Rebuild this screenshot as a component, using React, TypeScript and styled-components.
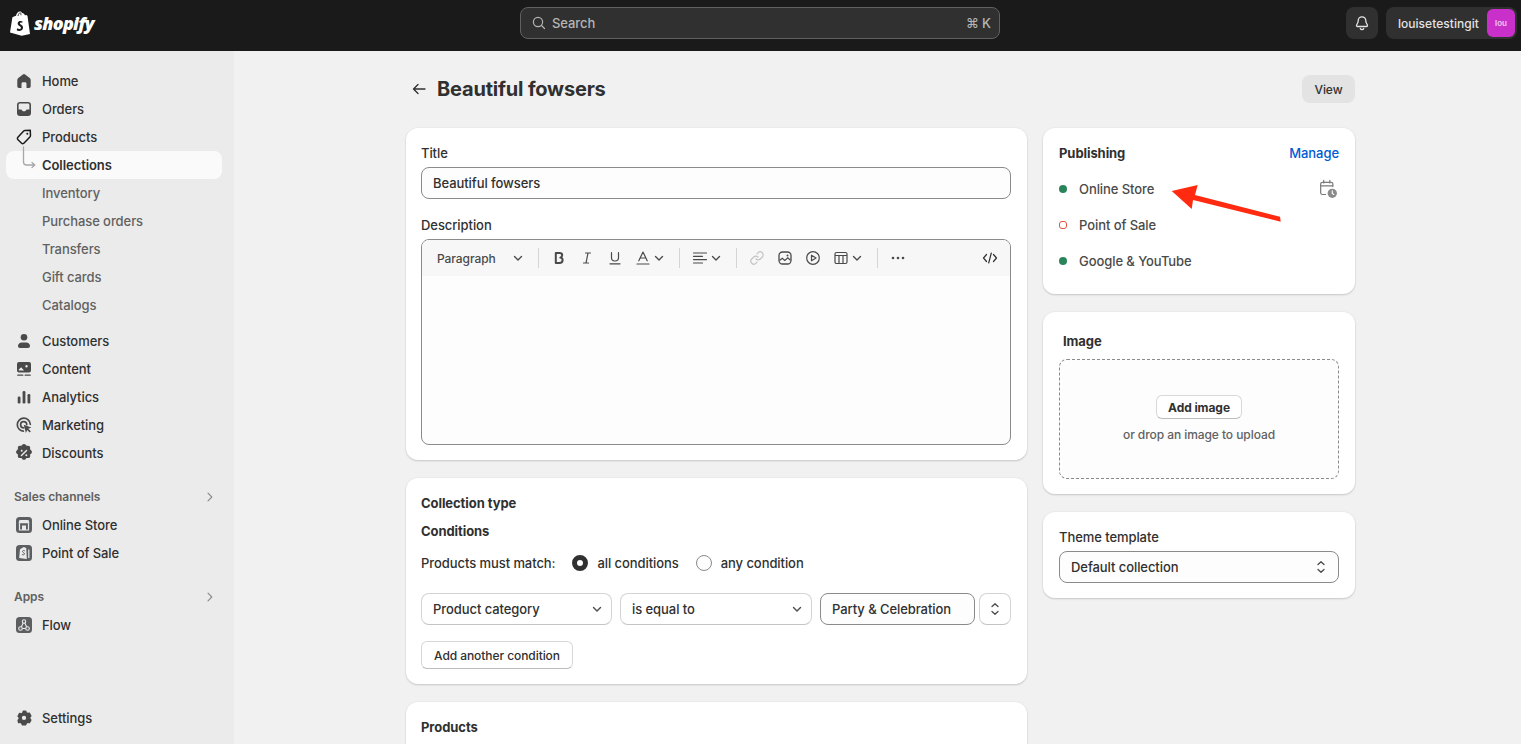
import React from "react";
import styled, { createGlobalStyle } from "styled-components";

const Global = createGlobalStyle`
  html, body { margin: 0; padding: 0; height: 100%; overflow: hidden; }
  body { font-family: Inter, "Liberation Sans", sans-serif; font-size: 13px; color: #303030; background: #f1f1f1; font-weight: 450; letter-spacing: -0.07px; }
  #root { height: 100%; }
  * { box-sizing: border-box; }
`;

const Shell = styled.div`
  height: 744px;
  display: flex;
  flex-direction: column;
  overflow: hidden;
`;
const TopBar = styled.header`
  height: 51px;
  flex: none;
  background: #1a1a1a;
  display: grid;
  grid-template-columns: 511px 480px 1fr;
  align-items: center;
  padding: 0 4px 5px 9px;
`;
const Logo = styled.div`
  display: flex;
  align-items: center;
  gap: 3px;
  color: #fff;
`;
const LogoText = styled.span`
  font-family: "Open Sans", sans-serif;
  font-weight: 800;
  font-style: italic;
  font-size: 18px;
  letter-spacing: -0.75px;
  line-height: 24px;
`;
const SearchBox = styled.div`
  height: 32px;
  background: #303030;
  border: 1px solid #616161;
  border-radius: 8px;
  display: flex;
  align-items: center;
  padding: 0 8px 0 10px;
  gap: 5px;
  color: #b5b5b5;
`;
const SearchLabel = styled.span`
  flex: 1;
`;
const TopRight = styled.div`
  display: flex;
  justify-content: flex-end;
  align-items: center;
  gap: 8px;
`;
const BellButton = styled.div`
  width: 32px;
  height: 32px;
  border-radius: 8px;
  background: #303030;
  display: flex;
  align-items: center;
  justify-content: center;
`;
const UserButton = styled.div`
  height: 32px;
  border-radius: 8px;
  background: #303030;
  display: flex;
  align-items: center;
  gap: 8px;
  padding: 0 2px 0 12px;
  color: #e3e3e3;
  font-size: 12px;
  font-weight: 500;
  letter-spacing: 0.05px;
`;
const Avatar = styled.div`
  width: 28px;
  height: 28px;
  border-radius: 6px;
  background: #c930c9;
  color: #f3c9f3;
  font-size: 8px;
  font-weight: 600;
  display: flex;
  align-items: center;
  justify-content: center;
`;
const Body = styled.div`
  flex: 1;
  display: flex;
  min-height: 0;
`;
const Sidebar = styled.nav`
  width: 234px;
  flex: none;
  background: #ebebeb;
  padding: 16px 12px 12px 6px;
  display: flex;
  flex-direction: column;
`;
const NavGroup = styled.div<{ $mb?: number; $mt?: number }>`
  display: flex;
  flex-direction: column;
  margin-top: ${(p) => p.$mt ?? 0}px;
  margin-bottom: ${(p) => p.$mb ?? 0}px;
`;
const NavRow = styled.div<{ $active?: boolean; $sub?: boolean }>`
  position: relative;
  height: 28px;
  border-radius: 8px;
  display: flex;
  align-items: center;
  padding-left: 10px;
  gap: 10px;
  background: ${(p) => (p.$active ? "#fafafa" : "transparent")};
  color: ${(p) => (p.$sub ? "#616161" : "#303030")};
  font-weight: ${(p) => (p.$active ? 600 : 450)};
`;
const NavIconSlot = styled.span`
  width: 16px;
  height: 20px;
  flex: none;
  display: flex;
  align-items: center;
  justify-content: center;
`;
const NavConnector = styled.svg`
  position: absolute;
  left: 16px;
  top: -5px;
`;
const NavHeading = styled.div`
  height: 28px;
  display: flex;
  align-items: center;
  justify-content: space-between;
  padding: 0 8px 1px 8px;
  color: #616161;
  font-size: 12px;
  font-weight: 600;
`;
const Spacer = styled.div`
  flex: 1;
`;
const Main = styled.main`
  flex: 1;
  min-width: 0;
  padding: 24px 166px 0 172px;
`;
const PageHeader = styled.div`
  height: 28px;
  display: flex;
  align-items: center;
  margin-bottom: 25px;
  padding-left: 5px;
`;
const PageTitle = styled.h1`
  flex: 1;
  margin: 0 0 0 10px;
  font-size: 20px;
  line-height: 28px;
  font-weight: 650;
  letter-spacing: -0.18px;
  color: #303030;
`;
const ViewButton = styled.div`
  width: 53px;
  height: 28px;
  border-radius: 8px;
  background: #e3e3e3;
  font-size: 12px;
  font-weight: 550;
  display: flex;
  align-items: center;
  justify-content: center;
`;
const Columns = styled.div`
  display: grid;
  grid-template-columns: 621px 312px;
  gap: 16px;
  align-items: start;
`;
const Column = styled.div`
  display: flex;
  flex-direction: column;
  gap: 18px;
`;
const Card = styled.section<{ $h: number; $pl?: number }>`
  position: relative;
  height: ${(p) => p.$h}px;
  background: #fff;
  border-radius: 12px;
  padding: 16px 16px 0 ${(p) => p.$pl ?? 15}px;
  box-shadow: 0 1px 2px rgba(26, 26, 26, 0.18), 0 0 0 1px rgba(0, 0, 0, 0.02);
`;
const Label = styled.div<{ $mt?: number; $strong?: boolean; $ml?: number }>`
  height: 18px;
  line-height: 18px;
  margin-top: ${(p) => p.$mt ?? 0}px;
  margin-left: ${(p) => p.$ml ?? 0}px;
  font-weight: ${(p) => (p.$strong ? 650 : 450)};
`;
const TextInput = styled.div`
  height: 32px;
  width: 100%;
  margin-top: 5px;
  border: 1px solid #8a8a8a;
  border-radius: 8px;
  background: #fdfdfd;
  display: flex;
  align-items: center;
  padding: 0 11px;
`;
const Editor = styled.div`
  margin-top: 5px;
  height: 206px;
  border: 1px solid #8a8a8a;
  border-radius: 8px;
  background: #fdfdfd;
  overflow: hidden;
`;
const Toolbar = styled.div`
  height: 36px;
  background: #f7f7f7;
  display: flex;
  align-items: center;
  color: #4a4a4a;
`;
const ParaSelect = styled.div`
  width: 110px;
  padding: 0 9px 0 15px;
  display: flex;
  align-items: center;
  justify-content: space-between;
  font-size: 12px;
  color: #4a4a4a;
`;
const ToolDivider = styled.span`
  width: 1px;
  height: 20px;
  margin: 0 6px;
  background: #d4d4d4;
  flex: none;
`;
const ToolBtn = styled.span<{ $wide?: boolean; $push?: boolean }>`
  width: ${(p) => (p.$wide ? 44 : 28)}px;
  height: 28px;
  flex: none;
  display: flex;
  align-items: center;
  justify-content: ${(p) => (p.$wide ? "flex-start" : "center")};
  padding-left: ${(p) => (p.$wide ? 6 : 0)}px;
  gap: 3px;
  margin-left: ${(p) => (p.$push ? "auto" : 0)};
  margin-right: ${(p) => (p.$push ? "6px" : 0)};
`;
const MatchRow = styled.div`
  margin-top: 13px;
  height: 20px;
  display: flex;
  align-items: center;
`;
const RadioLabel = styled.span`
  margin-left: 9px;
  margin-right: 17px;
`;
const RadioOn = styled.span`
  width: 16px;
  height: 16px;
  border-radius: 50%;
  border: 5px solid #303030;
  background: #fff;
  margin-left: 17px;
  flex: none;
`;
const RadioOff = styled.span`
  width: 16px;
  height: 16px;
  border-radius: 50%;
  border: 1px solid #8a8a8a;
  background: #fdfdfd;
  flex: none;
`;
const ConditionRow = styled.div`
  margin-top: 20px;
  display: flex;
  align-items: center;
`;
const SelectBox = styled.div<{ $w: number; $mr: number }>`
  width: ${(p) => p.$w}px;
  height: 32px;
  margin-right: ${(p) => p.$mr}px;
  flex: none;
  border: 1px solid #d4d4d4;
  border-bottom-color: #c4c4c4;
  border-radius: 8px;
  background: #fff;
  display: flex;
  align-items: center;
  justify-content: space-between;
  padding: 0 9px 0 11px;
`;
const CondInput = styled.div`
  width: 155px;
  height: 32px;
  margin-right: 4px;
  flex: none;
  border: 1px solid #8a8a8a;
  border-radius: 8px;
  background: #fdfdfd;
  display: flex;
  align-items: center;
  padding: 0 11px;
`;
const Stepper = styled.div`
  width: 32px;
  height: 32px;
  flex: none;
  border: 1px solid #d4d4d4;
  border-bottom-color: #c4c4c4;
  border-radius: 8px;
  display: flex;
  align-items: center;
  justify-content: center;
`;
const OutlineButton = styled.div<{ $w: number; $h: number; $bold?: boolean }>`
  width: ${(p) => p.$w}px;
  height: ${(p) => p.$h}px;
  border-radius: 6px;
  border: 1px solid #d8d8d8;
  border-bottom-color: #bdbdbd;
  background: #fff;
  font-size: 12px;
  font-weight: ${(p) => (p.$bold ? 650 : 550)};
  display: flex;
  align-items: center;
  justify-content: center;
`;
const AddConditionWrap = styled.div`
  margin-top: 16px;
`;
const CardHead = styled.div`
  display: flex;
  justify-content: space-between;
  align-items: center;
  height: 18px;
`;
const ManageLink = styled.span`
  color: #005bd3;
`;
const PubList = styled.div`
  margin-top: 9px;
  display: flex;
  flex-direction: column;
`;
const PubRow = styled.div`
  height: 36px;
  display: flex;
  align-items: center;
  gap: 12px;
  color: #4a4a4a;
`;
const PubName = styled.span`
  flex: 1;
`;
const Dot = styled.span`
  width: 8px;
  height: 8px;
  border-radius: 50%;
  background: #29845a;
  flex: none;
`;
const HollowDot = styled.span`
  width: 8px;
  height: 8px;
  border-radius: 3px;
  border: 1px solid #e5533d;
  background: #fff;
  flex: none;
`;
const ArrowOverlay = styled.svg`
  position: absolute;
  left: 125px;
  top: 55px;
`;
const DropZone = styled.div`
  margin-top: 9px;
  height: 120px;
  border: 1px dashed #8a8a8a;
  border-radius: 8px;
  background: #fdfdfd;
  display: flex;
  flex-direction: column;
  align-items: center;
  padding-top: 35px;
`;
const DropHint = styled.div`
  margin-top: 8px;
  font-size: 12px;
  line-height: 16px;
  color: #616161;
`;
const ThemeSelect = styled.div`
  margin-top: 5px;
  height: 32px;
  border: 1px solid #8a8a8a;
  border-radius: 8px;
  background: #fdfdfd;
  display: flex;
  align-items: center;
  justify-content: space-between;
  padding: 0 12px 0 11px;
`;

const ICON = "#4a4a4a";

const Svg: React.FC<{ s?: number; children: React.ReactNode }> = ({ s = 20, children }) => (
  <svg width={s} height={s} viewBox="0 0 20 20" fill="none" style={{ flex: "none" }}>{children}</svg>
);

const Chevron = ({ c = "#4a4a4a" }: { c?: string }) => (
  <svg width="10" height="10" viewBox="0 0 10 10" fill="none" style={{ flex: "none" }}>
    <path d="M1.5 3.5 5 7l3.5-3.5" stroke={c} strokeWidth="1.4" strokeLinecap="round" strokeLinejoin="round" />
  </svg>
);
const UpDown = () => (
  <svg width="10" height="14" viewBox="0 0 10 14" fill="none" style={{ flex: "none" }}>
    <path d="M2 4.6 5 1.8l3 2.8M2 9.4l3 2.8 3-2.8" stroke="#4a4a4a" strokeWidth="1.3" strokeLinecap="round" strokeLinejoin="round" />
  </svg>
);
const RightChevron = () => (
  <svg width="8" height="10" viewBox="0 0 8 10" fill="none">
    <path d="M2 1.2 5.8 5 2 8.8" stroke="#8a8a8a" strokeWidth="1.1" strokeLinecap="round" strokeLinejoin="round" />
  </svg>
);

const Icons: Record<string, React.ReactNode> = {
  home: <Svg><path d="M8.9 3.4a1.8 1.8 0 0 1 2.2 0l4.6 3.6c.7.5 1 1.200 1 2v6.300c0 1-.8 1.700-1.700 1.700h-2.500v-4.300c0-.8-.7-1.500-1.500-1.500h-2c-.8 0-1.500.7-1.500 1.500V17H5c-1 0-1.700-.7-1.700-1.700V9c0-.8.400-1.500 1-2z" fill={ICON} /></Svg>,
  orders: <Svg><path fillRule="evenodd" clipRule="evenodd" d="M6 3h8a3 3 0 0 1 3 3v8a3 3 0 0 1-3 3H6a3 3 0 0 1-3-3V6a3 3 0 0 1 3-3zm0 1.600A1.400 1.400 0 0 0 4.600 6v4.400H7c.4 0 .7.200.9.600l.4.800c.2.300.4.500.8.500h1.800c.4 0 .6-.2.800-.5l.4-.8c.2-.4.500-.6.900-.6h2.400V6A1.400 1.400 0 0 0 14 4.600z" fill={ICON} /></Svg>,
  products: <Svg><path d="M16.500 3.500h-5.300c-.5 0-1 .2-1.300.6l-6 6c-.7.7-.7 1.800 0 2.500l3.500 3.500c.7.700 1.800.700 2.500 0l6-6c.4-.3.600-.8.600-1.300z" transform="rotate(-2 10 10)" stroke="#1a1a1a" strokeWidth="1.500" strokeLinejoin="round" /><circle cx="13.300" cy="6.700" r="1" fill="#1a1a1a" /></Svg>,
  customers: <Svg><circle cx="10" cy="6.300" r="3.300" fill={ICON} /><path d="M4 15c0-2 1.800-3.500 3.800-3.500h4.400c2 0 3.800 1.500 3.800 3.500 0 1.100-.9 2-2 2H6c-1.100 0-2-.9-2-2z" fill={ICON} /></Svg>,
  content: <Svg><path fillRule="evenodd" clipRule="evenodd" d="M5 3h10a2 2 0 0 1 2 2v6.500a2 2 0 0 1-2 2H5a2 2 0 0 1-2-2V5a2 2 0 0 1 2-2zm7.500 3a1.200 1.200 0 1 0 0 2.400 1.200 1.200 0 0 0 0-2.400zM4.600 10.800l2.500-2.600 3 3.300H5.200c-.4 0-.6-.3-.6-.7z" fill={ICON} /><path d="M3.800 16.200h5M11.200 16.200h5" stroke={ICON} strokeWidth="1.300" strokeLinecap="round" /></Svg>,
  analytics: <Svg><rect x="3.700" y="9.500" width="2.800" height="7" rx="1.200" fill={ICON} /><rect x="8.600" y="4" width="2.800" height="12.500" rx="1.200" fill={ICON} /><rect x="13.500" y="7" width="2.800" height="9.500" rx="1.200" fill={ICON} /></Svg>,
  marketing: <Svg><path d="M9.300 16.200a6.500 6.500 0 1 1 7-6.900" stroke={ICON} strokeWidth="1.700" strokeLinecap="round" /><path d="M9.700 12.800a3.100 3.100 0 1 1 3.100-3.200" stroke={ICON} strokeWidth="1.700" strokeLinecap="round" /><path d="m9.700 9.700 7.700 2.700-3.100 1.400 2.500 2.500-1.100 1.100-2.500-2.500-1.300 3z" fill={ICON} /></Svg>,
  discounts: <Svg><g transform="translate(10 10) scale(1.1) translate(-10 -10)"><path fillRule="evenodd" clipRule="evenodd" d="M8.400 2.600a2 2 0 0 1 3.200 0l.7.900 1.100-.1a2 2 0 0 1 2.200 2.200l-.1 1.100.9.700a2 2 0 0 1 0 3.200l-.9.700.1 1.100a2 2 0 0 1-2.200 2.200l-1.100-.1-.7.900a2 2 0 0 1-3.200 0l-.7-.9-1.100.1a2 2 0 0 1-2.200-2.200l.1-1.100-.9-.7a2 2 0 0 1 0-3.200l.9-.7-.1-1.100a2 2 0 0 1 2.200-2.200l1.100.1z" fill={ICON} /><path d="m7.700 12.300 4.600-4.600" stroke="#ebebeb" strokeWidth="1.300" strokeLinecap="round" /><circle cx="7.900" cy="8" r=".9" fill="#ebebeb" /><circle cx="12.100" cy="12" r=".9" fill="#ebebeb" /></g></Svg>,
  store: <Svg><rect x="2" y="2" width="16" height="16" rx="3.500" fill="#5c5f62" /><path d="M5.500 5h9l1 3.200H4.500z" fill="#ebebeb" /><path d="M5.500 8.200V15h9V8.200" stroke="#ebebeb" strokeWidth="1.200" /><rect x="8" y="10.500" width="4" height="4.500" fill="#ebebeb" /></Svg>,
  pos: <Svg><rect x="2" y="2" width="16" height="16" rx="3.500" fill="#5c5f62" /><path d="M6 6.200 9.800 4l2.400 1 .6 11L5.200 15z" fill="#ebebeb" /><path d="M10.500 7.700c-.9-.5-2-.1-2 .8 0 1.200 2 1 2 2.300 0 1-1.200 1.300-2.200.8" stroke="#5c5f62" strokeWidth="1" strokeLinecap="round" /><path d="M14.800 6.500V15" stroke="#ebebeb" strokeWidth="1.200" /></Svg>,
  flow: <Svg><rect x="2" y="2" width="16" height="16" rx="3.500" fill="#5c5f62" /><circle cx="10" cy="6.500" r="1.700" stroke="#ebebeb" strokeWidth="1.100" /><circle cx="6.500" cy="13.500" r="1.800" stroke="#ebebeb" strokeWidth="1.100" /><circle cx="13.500" cy="13.500" r="1.800" stroke="#ebebeb" strokeWidth="1.100" /><path d="M9.200 8 7.300 11.900M10.800 8l1.900 3.900M8.300 13.500h3.400" stroke="#ebebeb" strokeWidth="1.100" /></Svg>,
  settings: <Svg><path fillRule="evenodd" clipRule="evenodd" d="M8.300 3h3.400c.5 0 .8.300.9.700l.3 1.200 1.200.7 1.200-.3c.4-.1.900.1 1.100.4l1.500 2.600c.2.400.2.800-.1 1.100l-.9.900v1.400l.9.900c.3.300.3.700.1 1.100l-1.500 2.600c-.2.300-.7.500-1.100.4l-1.200-.3-1.200.7-.3 1.200c-.1.400-.4.700-.9.700H8.300c-.5 0-.8-.3-.9-.7l-.3-1.200-1.200-.7-1.200.3c-.4.100-.9-.1-1.100-.4L3.100 14c-.2-.4-.2-.8.100-1.100l.9-.9v-1.400l-.9-.9C2.900 9.400 2.900 9 3.100 8.600l1.500-2.600c.2-.3.700-.5 1.100-.4l1.200.3 1.200-.7.300-1.200c.1-.4.400-.7.900-.7zM10 8.700a2.300 2.300 0 1 0 0 4.600 2.300 2.300 0 0 0 0-4.600z" transform="translate(0 -1) translate(10 10) scale(.94) translate(-10 -10)" fill={ICON} /></Svg>,
};

const navTop = [
  { k: "home", t: "Home" },
  { k: "orders", t: "Orders" },
  { k: "products", t: "Products" },
];
const navSub = ["Inventory", "Purchase orders", "Transfers", "Gift cards", "Catalogs"];
const navMid = [
  { k: "customers", t: "Customers" },
  { k: "content", t: "Content" },
  { k: "analytics", t: "Analytics" },
  { k: "marketing", t: "Marketing" },
  { k: "discounts", t: "Discounts" },
];

const T = "#4a4a4a";

export default function App() {
  return (
    <Shell>
      <Global />
      <TopBar>
        <Logo>
          <svg width="22" height="25" viewBox="0 0 22 25" fill="none" style={{ flex: "none" }}>
            <path d="M1 21.500 3.400 6.200C5 5.500 6.300 5 7 4.700 7.600 2.400 9.100.6 10.800.6c1 0 1.700.5 2.200 1.300 1.400-.1 2.400.9 3 2.300l1.500-.3 1 1.200L21 23l-8.300 1.700z" fill="#fff" />
            <path d="M9 5c.4-1.800 1.100-3 2.200-3.400M12 4.300c0-1-.1-1.800-.5-2.600" stroke="#1a1a1a" strokeWidth=".8" />
            <path d="M13.600 10.500c-1-.6-4.600-1-4.900 1.700-.3 2.700 3.500 2.800 3.200 4.700-.2 1.400-2.300 1.300-3.700.4l-.5 2c1.300.9 5.700 1.300 6.300-2.300.5-3.100-3.300-3.300-3.100-4.700.1-.9 1.500-.8 2.200-.4z" fill="#1a1a1a" />
          </svg>
          <LogoText>shopify</LogoText>
        </Logo>
        <SearchBox>
          <svg width="16" height="16" viewBox="0 0 16 16" fill="none">
            <circle cx="7" cy="7" r="4.600" stroke="#b5b5b5" strokeWidth="1.200" />
            <path d="m10.500 10.500 3 3" stroke="#b5b5b5" strokeWidth="1.200" strokeLinecap="round" />
          </svg>
          <SearchLabel>Search</SearchLabel>
          <span>⌘ K</span>
        </SearchBox>
        <TopRight>
          <BellButton>
            <svg width="16" height="16" viewBox="0 0 16 16" fill="none">
              <path d="M8 1.800c-2.300 0-3.800 1.700-3.800 3.900 0 2.700-1.700 3.600-1.700 5 0 .5.400.8.900.8h9.200c.5 0 .9-.3.900-.8 0-1.400-1.700-2.300-1.700-5 0-2.200-1.500-3.900-3.800-3.900z" stroke="#e3e3e3" strokeWidth="1.300" />
              <path d="M6.300 13.500c.3.800 1 1.200 1.700 1.200s1.400-.4 1.700-1.200" stroke="#e3e3e3" strokeWidth="1.300" strokeLinecap="round" />
            </svg>
          </BellButton>
          <UserButton>
            louisetestingit
            <Avatar>lou</Avatar>
          </UserButton>
        </TopRight>
      </TopBar>
      <Body>
        <Sidebar>
          <NavGroup>
            {navTop.map((n) => (
              <NavRow key={n.t}>
                <NavIconSlot>{Icons[n.k]}</NavIconSlot>
                {n.t}
              </NavRow>
            ))}
            <NavRow $active>
              <NavConnector width="20" height="24" viewBox="0 0 20 24" fill="none">
                <path d="M1.500 1v15c0 2 1 3 3 3h8M10 16.500l2.800 2.500L10 21.500" stroke="#a8a8a8" strokeWidth="1.300" strokeLinecap="round" strokeLinejoin="round" />
              </NavConnector>
              <NavIconSlot />
              Collections
            </NavRow>
            {navSub.map((t) => (
              <NavRow key={t} $sub>
                <NavIconSlot />
                {t}
              </NavRow>
            ))}
          </NavGroup>
          <NavGroup $mb={16} $mt={8}>
            {navMid.map((n) => (
              <NavRow key={n.t}>
                <NavIconSlot>{Icons[n.k]}</NavIconSlot>
                {n.t}
              </NavRow>
            ))}
          </NavGroup>
          <NavGroup $mb={16}>
            <NavHeading>Sales channels<RightChevron /></NavHeading>
            <NavRow><NavIconSlot>{Icons.store}</NavIconSlot>Online Store</NavRow>
            <NavRow><NavIconSlot>{Icons.pos}</NavIconSlot>Point of Sale</NavRow>
          </NavGroup>
          <NavGroup>
            <NavHeading>Apps<RightChevron /></NavHeading>
            <NavRow><NavIconSlot>{Icons.flow}</NavIconSlot>Flow</NavRow>
          </NavGroup>
          <Spacer />
          <NavRow><NavIconSlot>{Icons.settings}</NavIconSlot>Settings</NavRow>
        </Sidebar>
        <Main>
          <PageHeader>
            <svg width="16" height="16" viewBox="0 0 16 16" fill="none" style={{ flex: "none" }}>
              <path d="M14 8H2.500M7 3.500 2.500 8 7 12.500" stroke="#303030" strokeWidth="1.300" strokeLinecap="round" strokeLinejoin="round" />
            </svg>
            <PageTitle>Beautiful fowsers</PageTitle>
            <ViewButton>View</ViewButton>
          </PageHeader>
          <Columns>
            <Column>
              <Card $h={332}>
                <Label>Title</Label>
                <TextInput>Beautiful fowsers</TextInput>
                <Label $mt={17}>Description</Label>
                <Editor>
                  <Toolbar>
                    <ParaSelect>Paragraph<Chevron /></ParaSelect>
                    <ToolDivider />
                    <ToolBtn>
                      <svg width="14" height="14" viewBox="0 0 14 14" fill="none"><path d="M3.800 2h3.600c1.800 0 2.800.9 2.800 2.300 0 1.200-.8 2-1.800 2.300 1.400.2 2.200 1.200 2.200 2.500 0 1.800-1.200 2.900-3.200 2.900H3.800z" stroke={T} strokeWidth="2" strokeLinejoin="round" /></svg>
                    </ToolBtn>
                    <ToolBtn>
                      <svg width="14" height="14" viewBox="0 0 14 14" fill="none"><path d="M5.500 2h5M3.500 12h5M8 2 6 12" stroke={T} strokeWidth="1.200" strokeLinecap="round" /></svg>
                    </ToolBtn>
                    <ToolBtn>
                      <svg width="14" height="14" viewBox="0 0 14 14" fill="none"><path d="M3.500 1.500v5.300c0 2 1.500 3.200 3.500 3.200s3.500-1.200 3.500-3.200V1.500M2 12.800h10" stroke={T} strokeWidth="1.200" strokeLinecap="round" /></svg>
                    </ToolBtn>
                    <ToolBtn $wide>
                      <svg width="16" height="16" viewBox="0 0 16 16" fill="none"><path d="M3.800 10.800 8 2l4.200 8.800M5.200 8h5.600M2 14h12" stroke={T} strokeWidth="1.200" strokeLinecap="round" strokeLinejoin="round" /></svg>
                      <Chevron />
                    </ToolBtn>
                    <ToolDivider />
                    <ToolBtn $wide>
                      <svg width="16" height="16" viewBox="0 0 16 16" fill="none"><path d="M1.500 3h13M1.500 6.300h9M1.500 9.600h13M1.500 13h9" stroke={T} strokeWidth="1.200" strokeLinecap="round" /></svg>
                      <Chevron />
                    </ToolBtn>
                    <ToolDivider />
                    <ToolBtn>
                      <svg width="16" height="16" viewBox="0 0 16 16" fill="none"><path d="M7 9a3 3 0 0 0 4.300 0l2-2A3 3 0 0 0 9 2.800l-1 1M9 7a3 3 0 0 0-4.300 0l-2 2A3 3 0 0 0 7 13.200l1-1" stroke="#c4c4c4" strokeWidth="1.200" strokeLinecap="round" /></svg>
                    </ToolBtn>
                    <ToolBtn>
                      <svg width="16" height="16" viewBox="0 0 16 16" fill="none"><rect x="2" y="2" width="12" height="12" rx="3.500" stroke={T} strokeWidth="1.300" /><path d="m2.500 10.500 2.800-2.300 2.500 2.300 3-2.800 2.700 2.500" stroke={T} strokeWidth="1.200" /><circle cx="10.500" cy="5.500" r="1" fill={T} /></svg>
                    </ToolBtn>
                    <ToolBtn>
                      <svg width="16" height="16" viewBox="0 0 16 16" fill="none"><circle cx="8" cy="8" r="6.300" stroke={T} strokeWidth="1.200" /><path d="M6.500 5.200 11 8l-4.500 2.800z" stroke={T} strokeWidth="1.200" strokeLinejoin="round" /></svg>
                    </ToolBtn>
                    <ToolBtn $wide>
                      <svg width="16" height="16" viewBox="0 0 16 16" fill="none"><rect x="2" y="2.500" width="12" height="11" rx="1.500" stroke={T} strokeWidth="1.200" /><path d="M2 5.500h12M6 5.500v8M10 5.500v8" stroke={T} strokeWidth="1.200" /></svg>
                      <Chevron />
                    </ToolBtn>
                    <ToolDivider />
                    <ToolBtn>
                      <svg width="16" height="16" viewBox="0 0 16 16"><circle cx="3" cy="8" r="1.300" fill={T} /><circle cx="8" cy="8" r="1.300" fill={T} /><circle cx="13" cy="8" r="1.300" fill={T} /></svg>
                    </ToolBtn>
                    <ToolBtn $push>
                      <svg width="16" height="16" viewBox="0 0 16 16" fill="none"><path d="M4.500 4.500 1.500 8l3 3.500M11.500 4.500l3 3.500-3 3.500M9.300 3 6.700 13" stroke="#303030" strokeWidth="1.200" strokeLinecap="round" strokeLinejoin="round" /></svg>
                    </ToolBtn>
                  </Toolbar>
                </Editor>
              </Card>
              <Card $h={206}>
                <Label $strong>Collection type</Label>
                <Label $strong $mt={10}>Conditions</Label>
                <MatchRow>
                  Products must match:
                  <RadioOn />
                  <RadioLabel>all conditions</RadioLabel>
                  <RadioOff />
                  <RadioLabel>any condition</RadioLabel>
                </MatchRow>
                <ConditionRow>
                  <SelectBox $w={191} $mr={8}>Product category<Chevron /></SelectBox>
                  <SelectBox $w={192} $mr={8}>is equal to<Chevron /></SelectBox>
                  <CondInput>Party &amp; Celebration</CondInput>
                  <Stepper><UpDown /></Stepper>
                </ConditionRow>
                <AddConditionWrap>
                  <OutlineButton $w={152} $h={28}>Add another condition</OutlineButton>
                </AddConditionWrap>
              </Card>
              <Card $h={120}>
                <Label $strong>Products</Label>
              </Card>
            </Column>
            <Column>
              <Card $h={166} $pl={16}>
                <CardHead>
                  <Label $strong>Publishing</Label>
                  <ManageLink>Manage</ManageLink>
                </CardHead>
                <PubList>
                  <PubRow>
                    <Dot />
                    <PubName>Online Store</PubName>
                    <svg width="22" height="22" viewBox="0 0 18 18" fill="none" style={{ flex: "none" }}>
                      <path d="M7 13.500H4.500A1.500 1.500 0 0 1 3 12V5a1.500 1.500 0 0 1 1.500-1.500h7A1.500 1.500 0 0 1 13 5v2M3 6.500h10M5.500 2v2M10.500 2v2" stroke="#7a7a7a" strokeWidth="1" strokeLinecap="round" />
                      <circle cx="12.500" cy="12.500" r="3.800" fill="#8a8a8a" />
                      <path d="M12.500 10.500v2.200l1.300.8" stroke="#fff" strokeWidth=".9" strokeLinecap="round" />
                    </svg>
                  </PubRow>
                  <PubRow><HollowDot /><PubName>Point of Sale</PubName></PubRow>
                  <PubRow><Dot /><PubName>Google &amp; YouTube</PubName></PubRow>
                </PubList>
                <ArrowOverlay width="116" height="42" viewBox="0 0 116 42" fill="none">
                  <path d="M3.700 8 29.700 2 27 12 112 33.700 112.700 38.700 25 17 23.700 26z" fill="#ff2a10" />
                </ArrowOverlay>
              </Card>
              <Card $h={182} $pl={16}>
                <Label $strong $ml={4} $mt={4}>Image</Label>
                <DropZone>
                  <OutlineButton $w={86} $h={24} $bold>Add image</OutlineButton>
                  <DropHint>or drop an image to upload</DropHint>
                </DropZone>
              </Card>
              <Card $h={86} $pl={16}>
                <Label>Theme template</Label>
                <ThemeSelect>Default collection<UpDown /></ThemeSelect>
              </Card>
            </Column>
          </Columns>
        </Main>
      </Body>
    </Shell>
  );
}
